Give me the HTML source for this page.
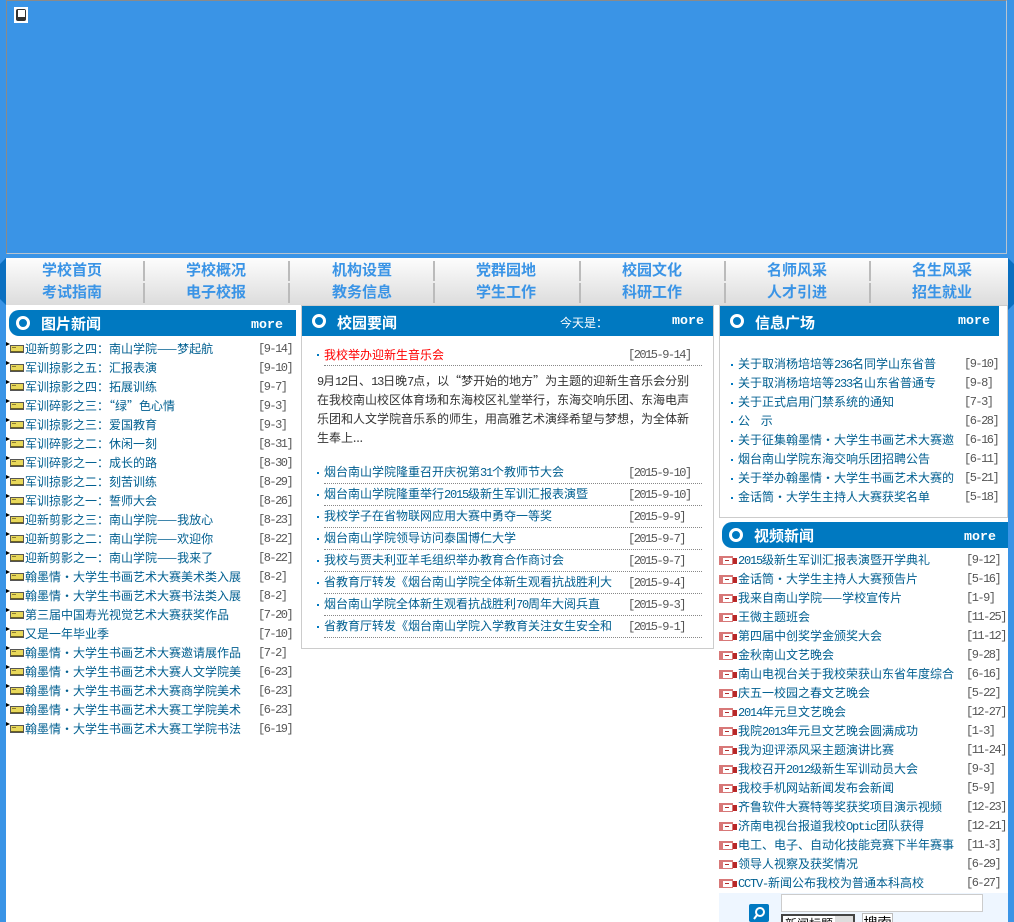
<!DOCTYPE html>
<html><head><meta charset="utf-8"><style>
html,body{margin:0;padding:0;width:1014px;height:922px;overflow:hidden;background:#3a94e6}
body{position:relative;font:12px/19px "WenQuanYi Zen Hei","Noto Sans CJK SC",sans-serif;color:#005f90}
div,span,svg{position:absolute;box-sizing:border-box}
tt{font:12px "Liberation Mono",monospace;letter-spacing:-1.2px}
#banner{left:6px;top:0;width:1001px;height:254px;background:#3a94e6;border:1px solid #8a8a8a;border-bottom:1px solid #b8c4d0;border-right:1px solid #b8c4d0}
#ck{left:14px;top:7px;width:14px;height:16px;background:#fff}
#ck i{position:absolute;left:2px;top:2px;width:10px;height:12px;background:#333;border-radius:2px}
#ck b{position:absolute;left:4px;top:3px;width:7px;height:7px;background:#fff}
#main{left:6px;top:305px;width:1002px;height:617px;background:#fff}
#nav{left:6px;top:258px;width:1002px;height:47px;background:linear-gradient(#fdfdfd,#dcdcdc)}
.n{width:120px;text-align:center;font:bold 15px/20px "WenQuanYi Zen Hei","Noto Sans CJK SC",sans-serif;color:#3a94e6;white-space:nowrap}
.s{width:2px;height:20px;background:#bbb}
.h{background:#0079c1;height:30px}
.c{width:14px;height:14px;border-radius:50%;border:3px solid #fff;background:#0079c1}
.t{font:bold 15px/20px "WenQuanYi Zen Hei","Noto Sans CJK SC",sans-serif;color:#fff;white-space:nowrap}
.m{font:bold 13.3px/14px "Liberation Mono",monospace;color:#fff}
.b{border:1px solid #ccc;background:#fff}
.l{white-space:nowrap;height:19px;width:290px}
.l em{position:absolute;font-style:normal;white-space:nowrap;overflow:hidden}
.l u{position:absolute;top:1px;text-decoration:none;color:#555;white-space:nowrap;font:12px/19px "Liberation Mono",monospace;letter-spacing:-1.5px}
.g svg{left:0;top:3px}
.mid{left:317px;width:385px;height:22px;white-space:nowrap;line-height:21px}
.mid::before{content:"";position:absolute;left:0;top:10px;width:2px;height:2px;background:#0079c1}
.mid::after{content:"";position:absolute;left:7px;right:0;bottom:0;border-bottom:1px dotted #888}
.mid em{position:absolute;left:7px;top:-1px;font-style:normal}
.mid u{position:absolute;left:311px;top:1px;text-decoration:none;color:#555;font:12px/21px "Liberation Mono",monospace;letter-spacing:-1.5px}
.i em{left:7px}
.i::before{content:"";position:absolute;left:0;top:10px;width:2px;height:2px;background:#0079c1}
</style></head><body>
<svg width="0" height="0" style="left:0;top:0"><defs>
<symbol id="f" viewBox="0 0 18 14"><path d="M0 0l4 2-4 2z" fill="#000"/><rect x="4.5" y="3.5" width="13" height="7" fill="#e8d85a" stroke="#555"/><rect x="6" y="5" width="4" height="1" fill="#8a7a30"/><rect x="5" y="9" width="12" height="1" fill="#6b6020"/></symbol>
<symbol id="v" viewBox="0 0 19 14"><rect x="0" y="3" width="14" height="9" fill="#d87878"/><rect x="4" y="5" width="9" height="6" fill="#fff"/><rect x="6" y="7" width="4" height="1" fill="#b03030"/><rect x="14" y="5" width="4" height="6" fill="#b82828"/></symbol>
</defs></svg>
<div id="banner"></div>
<div id="ck"><i></i><b></b></div>
<div id="main"></div>
<div id="nav"></div>
<div style="left:1008px;top:258px;width:6px;height:52px;background:#0a6fc0;clip-path:polygon(0 0,100% 6px,100% calc(100% - 6px),0 100%)"></div>
<div style="left:0;top:258px;width:6px;height:47px;background:#0a6fc0;clip-path:polygon(0 6px,100% 0,100% 100%,0 calc(100% - 6px))"></div>

<div class="n" style="left:12px;top:260px">学校首页</div><div class="n" style="left:156px;top:260px">学校概况</div><div class="n" style="left:302px;top:260px">机构设置</div><div class="n" style="left:446px;top:260px">党群园地</div><div class="n" style="left:592px;top:260px">校园文化</div><div class="n" style="left:737px;top:260px">名师风采</div><div class="n" style="left:882px;top:260px">名生风采</div>
<div class="n" style="left:12px;top:282px">考试指南</div><div class="n" style="left:156px;top:282px">电子校报</div><div class="n" style="left:302px;top:282px">教务信息</div><div class="n" style="left:446px;top:282px">学生工作</div><div class="n" style="left:592px;top:282px">科研工作</div><div class="n" style="left:737px;top:282px">人才引进</div><div class="n" style="left:882px;top:282px">招生就业</div>
<div class="s" style="left:143px;top:261px"></div><div class="s" style="left:143px;top:283px"></div><div class="s" style="left:288px;top:261px"></div><div class="s" style="left:288px;top:283px"></div><div class="s" style="left:433px;top:261px"></div><div class="s" style="left:433px;top:283px"></div><div class="s" style="left:579px;top:261px"></div><div class="s" style="left:579px;top:283px"></div><div class="s" style="left:724px;top:261px"></div><div class="s" style="left:724px;top:283px"></div><div class="s" style="left:869px;top:261px"></div><div class="s" style="left:869px;top:283px"></div>

<!-- left -->
<div class="h" style="left:9px;top:310px;width:287px;height:26px;border-radius:10px 0 0 10px"></div>
<div class="c" style="left:16px;top:316px"></div>
<div class="t" style="left:41px;top:314px">图片新闻</div>
<div class="m" style="left:251px;top:318px">more</div>

<div class="l g" style="left:6px;top:339px"><svg width="18" height="14"><use href="#f"/></svg><em style="left:19px">迎新剪影之四：南山学院——梦起航</em><u style="left:252px">[9-14]</u></div>
<div class="l g" style="left:6px;top:358px"><svg width="18" height="14"><use href="#f"/></svg><em style="left:19px">军训掠影之五：汇报表演</em><u style="left:252px">[9-10]</u></div>
<div class="l g" style="left:6px;top:377px"><svg width="18" height="14"><use href="#f"/></svg><em style="left:19px">军训掠影之四：拓展训练</em><u style="left:252px">[9-7]</u></div>
<div class="l g" style="left:6px;top:396px"><svg width="18" height="14"><use href="#f"/></svg><em style="left:19px">军训碎影之三：“绿”色心情</em><u style="left:252px">[9-3]</u></div>
<div class="l g" style="left:6px;top:415px"><svg width="18" height="14"><use href="#f"/></svg><em style="left:19px">军训掠影之三：爱国教育</em><u style="left:252px">[9-3]</u></div>
<div class="l g" style="left:6px;top:434px"><svg width="18" height="14"><use href="#f"/></svg><em style="left:19px">军训碎影之二：休闲一刻</em><u style="left:252px">[8-31]</u></div>
<div class="l g" style="left:6px;top:453px"><svg width="18" height="14"><use href="#f"/></svg><em style="left:19px">军训碎影之一：成长的路</em><u style="left:252px">[8-30]</u></div>
<div class="l g" style="left:6px;top:472px"><svg width="18" height="14"><use href="#f"/></svg><em style="left:19px">军训掠影之二：刻苦训练</em><u style="left:252px">[8-29]</u></div>
<div class="l g" style="left:6px;top:491px"><svg width="18" height="14"><use href="#f"/></svg><em style="left:19px">军训掠影之一：誓师大会</em><u style="left:252px">[8-26]</u></div>
<div class="l g" style="left:6px;top:510px"><svg width="18" height="14"><use href="#f"/></svg><em style="left:19px">迎新剪影之三：南山学院——我放心</em><u style="left:252px">[8-23]</u></div>
<div class="l g" style="left:6px;top:529px"><svg width="18" height="14"><use href="#f"/></svg><em style="left:19px">迎新剪影之二：南山学院——欢迎你</em><u style="left:252px">[8-22]</u></div>
<div class="l g" style="left:6px;top:548px"><svg width="18" height="14"><use href="#f"/></svg><em style="left:19px">迎新剪影之一：南山学院——我来了</em><u style="left:252px">[8-22]</u></div>
<div class="l g" style="left:6px;top:567px"><svg width="18" height="14"><use href="#f"/></svg><em style="left:19px">翰墨情·大学生书画艺术大赛美术类入展</em><u style="left:252px">[8-2]</u></div>
<div class="l g" style="left:6px;top:586px"><svg width="18" height="14"><use href="#f"/></svg><em style="left:19px">翰墨情·大学生书画艺术大赛书法类入展</em><u style="left:252px">[8-2]</u></div>
<div class="l g" style="left:6px;top:605px"><svg width="18" height="14"><use href="#f"/></svg><em style="left:19px">第三届中国寿光视觉艺术大赛获奖作品</em><u style="left:252px">[7-20]</u></div>
<div class="l g" style="left:6px;top:624px"><svg width="18" height="14"><use href="#f"/></svg><em style="left:19px">又是一年毕业季</em><u style="left:252px">[7-10]</u></div>
<div class="l g" style="left:6px;top:643px"><svg width="18" height="14"><use href="#f"/></svg><em style="left:19px">翰墨情·大学生书画艺术大赛邀请展作品</em><u style="left:252px">[7-2]</u></div>
<div class="l g" style="left:6px;top:662px"><svg width="18" height="14"><use href="#f"/></svg><em style="left:19px">翰墨情·大学生书画艺术大赛人文学院美</em><u style="left:252px">[6-23]</u></div>
<div class="l g" style="left:6px;top:681px"><svg width="18" height="14"><use href="#f"/></svg><em style="left:19px">翰墨情·大学生书画艺术大赛商学院美术</em><u style="left:252px">[6-23]</u></div>
<div class="l g" style="left:6px;top:700px"><svg width="18" height="14"><use href="#f"/></svg><em style="left:19px">翰墨情·大学生书画艺术大赛工学院美术</em><u style="left:252px">[6-23]</u></div>
<div class="l g" style="left:6px;top:719px"><svg width="18" height="14"><use href="#f"/></svg><em style="left:19px">翰墨情·大学生书画艺术大赛工学院书法</em><u style="left:252px">[6-19]</u></div>

<!-- middle -->
<div class="b" style="left:301px;top:305px;width:413px;height:344px"></div>
<div class="h" style="left:302px;top:306px;width:411px"></div>
<div class="c" style="left:312px;top:314px"></div>
<div class="t" style="left:337px;top:313px">校园要闻</div>
<div style="left:560px;top:313px;color:#fff;line-height:20px">今天是：</div>
<div class="m" style="left:672px;top:314px">more</div>
<div class="mid" style="top:344px"><em style="color:#f00;top:0">我校举办迎新生音乐会</em><u>[2015-9-14]</u></div>
<div style="left:317px;top:371px;width:378px;color:#333;line-height:19px"><tt>9</tt>月<tt>12</tt>日、<tt>13</tt>日晚<tt>7</tt>点，以“梦开始的地方”为主题的迎新生音乐会分别在我校南山校区体育场和东海校区礼堂举行，东海交响乐团、东海电声乐团和人文学院音乐系的师生，用高雅艺术演绎希望与梦想，为全体新生奉上...</div>
<div class="mid" style="top:462px"><em>烟台南山学院隆重召开庆祝第<tt>31</tt>个教师节大会</em><u>[2015-9-10]</u></div>
<div class="mid" style="top:484px"><em>烟台南山学院隆重举行<tt>2015</tt>级新生军训汇报表演暨</em><u>[2015-9-10]</u></div>
<div class="mid" style="top:506px"><em>我校学子在省物联网应用大赛中勇夺一等奖</em><u>[2015-9-9]</u></div>
<div class="mid" style="top:528px"><em>烟台南山学院领导访问泰国博仁大学</em><u>[2015-9-7]</u></div>
<div class="mid" style="top:550px"><em>我校与贾夫利亚羊毛组织举办教育合作商讨会</em><u>[2015-9-7]</u></div>
<div class="mid" style="top:572px"><em>省教育厅转发《烟台南山学院全体新生观看抗战胜利大</em><u>[2015-9-4]</u></div>
<div class="mid" style="top:594px"><em>烟台南山学院全体新生观看抗战胜利<tt>70</tt>周年大阅兵直</em><u>[2015-9-3]</u></div>
<div class="mid" style="top:616px"><em>省教育厅转发《烟台南山学院入学教育关注女生安全和</em><u>[2015-9-1]</u></div>

<!-- right info -->
<div class="b" style="left:719px;top:305px;width:289px;height:213px"></div>
<div class="h" style="left:720px;top:306px;width:279px"></div>
<div class="c" style="left:730px;top:314px"></div>
<div class="t" style="left:755px;top:313px">信息广场</div>
<div class="m" style="left:958px;top:314px">more</div>
<div class="l i" style="left:731px;top:354px"><em>关于取消杨培培等<tt>236</tt>名同学山东省普</em><u style="left:233px">[9-10]</u></div>
<div class="l i" style="left:731px;top:373px"><em>关于取消杨培培等<tt>233</tt>名山东省普通专</em><u style="left:233px">[9-8]</u></div>
<div class="l i" style="left:731px;top:392px"><em>关于正式启用门禁系统的通知</em><u style="left:233px">[7-3]</u></div>
<div class="l i" style="left:731px;top:411px"><em>公&nbsp;&nbsp;&nbsp;&nbsp;示</em><u style="left:233px">[6-28]</u></div>
<div class="l i" style="left:731px;top:430px"><em>关于征集翰墨情·大学生书画艺术大赛邀</em><u style="left:233px">[6-16]</u></div>
<div class="l i" style="left:731px;top:449px"><em>烟台南山学院东海交响乐团招聘公告</em><u style="left:233px">[6-11]</u></div>
<div class="l i" style="left:731px;top:468px"><em>关于举办翰墨情·大学生书画艺术大赛的</em><u style="left:233px">[5-21]</u></div>
<div class="l i" style="left:731px;top:487px"><em>金话筒·大学生主持人大赛获奖名单</em><u style="left:233px">[5-18]</u></div>

<!-- video -->
<div class="h" style="left:722px;top:522px;width:286px;height:26px;border-radius:10px 0 0 10px"></div>
<div class="c" style="left:729px;top:528px"></div>
<div class="t" style="left:754px;top:526px">视频新闻</div>
<div class="m" style="left:964px;top:530px">more</div>
<div class="l g" style="left:719px;top:550px"><svg width="19" height="14"><use href="#v"/></svg><em style="left:19px"><tt>2015</tt>级新生军训汇报表演暨开学典礼</em><u style="left:247px">[9-12]</u></div>
<div class="l g" style="left:719px;top:569px"><svg width="19" height="14"><use href="#v"/></svg><em style="left:19px">金话筒·大学生主持人大赛预告片</em><u style="left:247px">[5-16]</u></div>
<div class="l g" style="left:719px;top:588px"><svg width="19" height="14"><use href="#v"/></svg><em style="left:19px">我来自南山学院——学校宣传片</em><u style="left:247px">[1-9]</u></div>
<div class="l g" style="left:719px;top:607px"><svg width="19" height="14"><use href="#v"/></svg><em style="left:19px">王微主题班会</em><u style="left:247px">[11-25]</u></div>
<div class="l g" style="left:719px;top:626px"><svg width="19" height="14"><use href="#v"/></svg><em style="left:19px">第四届中创奖学金颁奖大会</em><u style="left:247px">[11-12]</u></div>
<div class="l g" style="left:719px;top:645px"><svg width="19" height="14"><use href="#v"/></svg><em style="left:19px">金秋南山文艺晚会</em><u style="left:247px">[9-28]</u></div>
<div class="l g" style="left:719px;top:664px"><svg width="19" height="14"><use href="#v"/></svg><em style="left:19px">南山电视台关于我校荣获山东省年度综合</em><u style="left:247px">[6-16]</u></div>
<div class="l g" style="left:719px;top:683px"><svg width="19" height="14"><use href="#v"/></svg><em style="left:19px">庆五一校园之春文艺晚会</em><u style="left:247px">[5-22]</u></div>
<div class="l g" style="left:719px;top:702px"><svg width="19" height="14"><use href="#v"/></svg><em style="left:19px"><tt>2014</tt>年元旦文艺晚会</em><u style="left:247px">[12-27]</u></div>
<div class="l g" style="left:719px;top:721px"><svg width="19" height="14"><use href="#v"/></svg><em style="left:19px">我院<tt>2013</tt>年元旦文艺晚会圆满成功</em><u style="left:247px">[1-3]</u></div>
<div class="l g" style="left:719px;top:740px"><svg width="19" height="14"><use href="#v"/></svg><em style="left:19px">我为迎评添风采主题演讲比赛</em><u style="left:247px">[11-24]</u></div>
<div class="l g" style="left:719px;top:759px"><svg width="19" height="14"><use href="#v"/></svg><em style="left:19px">我校召开<tt>2012</tt>级新生军训动员大会</em><u style="left:247px">[9-3]</u></div>
<div class="l g" style="left:719px;top:778px"><svg width="19" height="14"><use href="#v"/></svg><em style="left:19px">我校手机网站新闻发布会新闻</em><u style="left:247px">[5-9]</u></div>
<div class="l g" style="left:719px;top:797px"><svg width="19" height="14"><use href="#v"/></svg><em style="left:19px">齐鲁软件大赛特等奖获奖项目演示视频</em><u style="left:247px">[12-23]</u></div>
<div class="l g" style="left:719px;top:816px"><svg width="19" height="14"><use href="#v"/></svg><em style="left:19px">济南电视台报道我校<tt>Optic</tt>团队获得</em><u style="left:247px">[12-21]</u></div>
<div class="l g" style="left:719px;top:835px"><svg width="19" height="14"><use href="#v"/></svg><em style="left:19px">电工、电子、自动化技能竞赛下半年赛事</em><u style="left:247px">[11-3]</u></div>
<div class="l g" style="left:719px;top:854px"><svg width="19" height="14"><use href="#v"/></svg><em style="left:19px">领导人视察及获奖情况</em><u style="left:247px">[6-29]</u></div>
<div class="l g" style="left:719px;top:873px"><svg width="19" height="14"><use href="#v"/></svg><em style="left:19px"><tt>CCTV-</tt>新闻公布我校为普通本科高校</em><u style="left:247px">[6-27]</u></div>

<!-- search -->
<div style="left:719px;top:893px;width:289px;height:29px;background:#eef6ff"></div>
<svg style="left:749px;top:904px" width="20" height="18"><rect width="20" height="18" rx="2" fill="#0079c1"/><circle cx="11" cy="8" r="4" fill="none" stroke="#fff" stroke-width="2"/><path d="M8 11l-3 4" stroke="#fff" stroke-width="2"/></svg>
<div style="left:781px;top:894px;width:202px;height:18px;background:#fff;border:1px solid #ccc"></div>
<div style="left:781px;top:914px;width:74px;height:20px;background:#fff;border:2px solid #444;color:#000;line-height:16px;padding-left:2px;white-space:nowrap">新闻标题<span style="right:0;top:0;width:18px;height:16px;background:#ddd"></span></div>
<div style="left:862px;top:913px;width:31px;height:20px;background:#fff;border:1px solid #bbb;color:#000;text-align:center;line-height:18px;font-size:14px">搜索</div>
</body></html>
